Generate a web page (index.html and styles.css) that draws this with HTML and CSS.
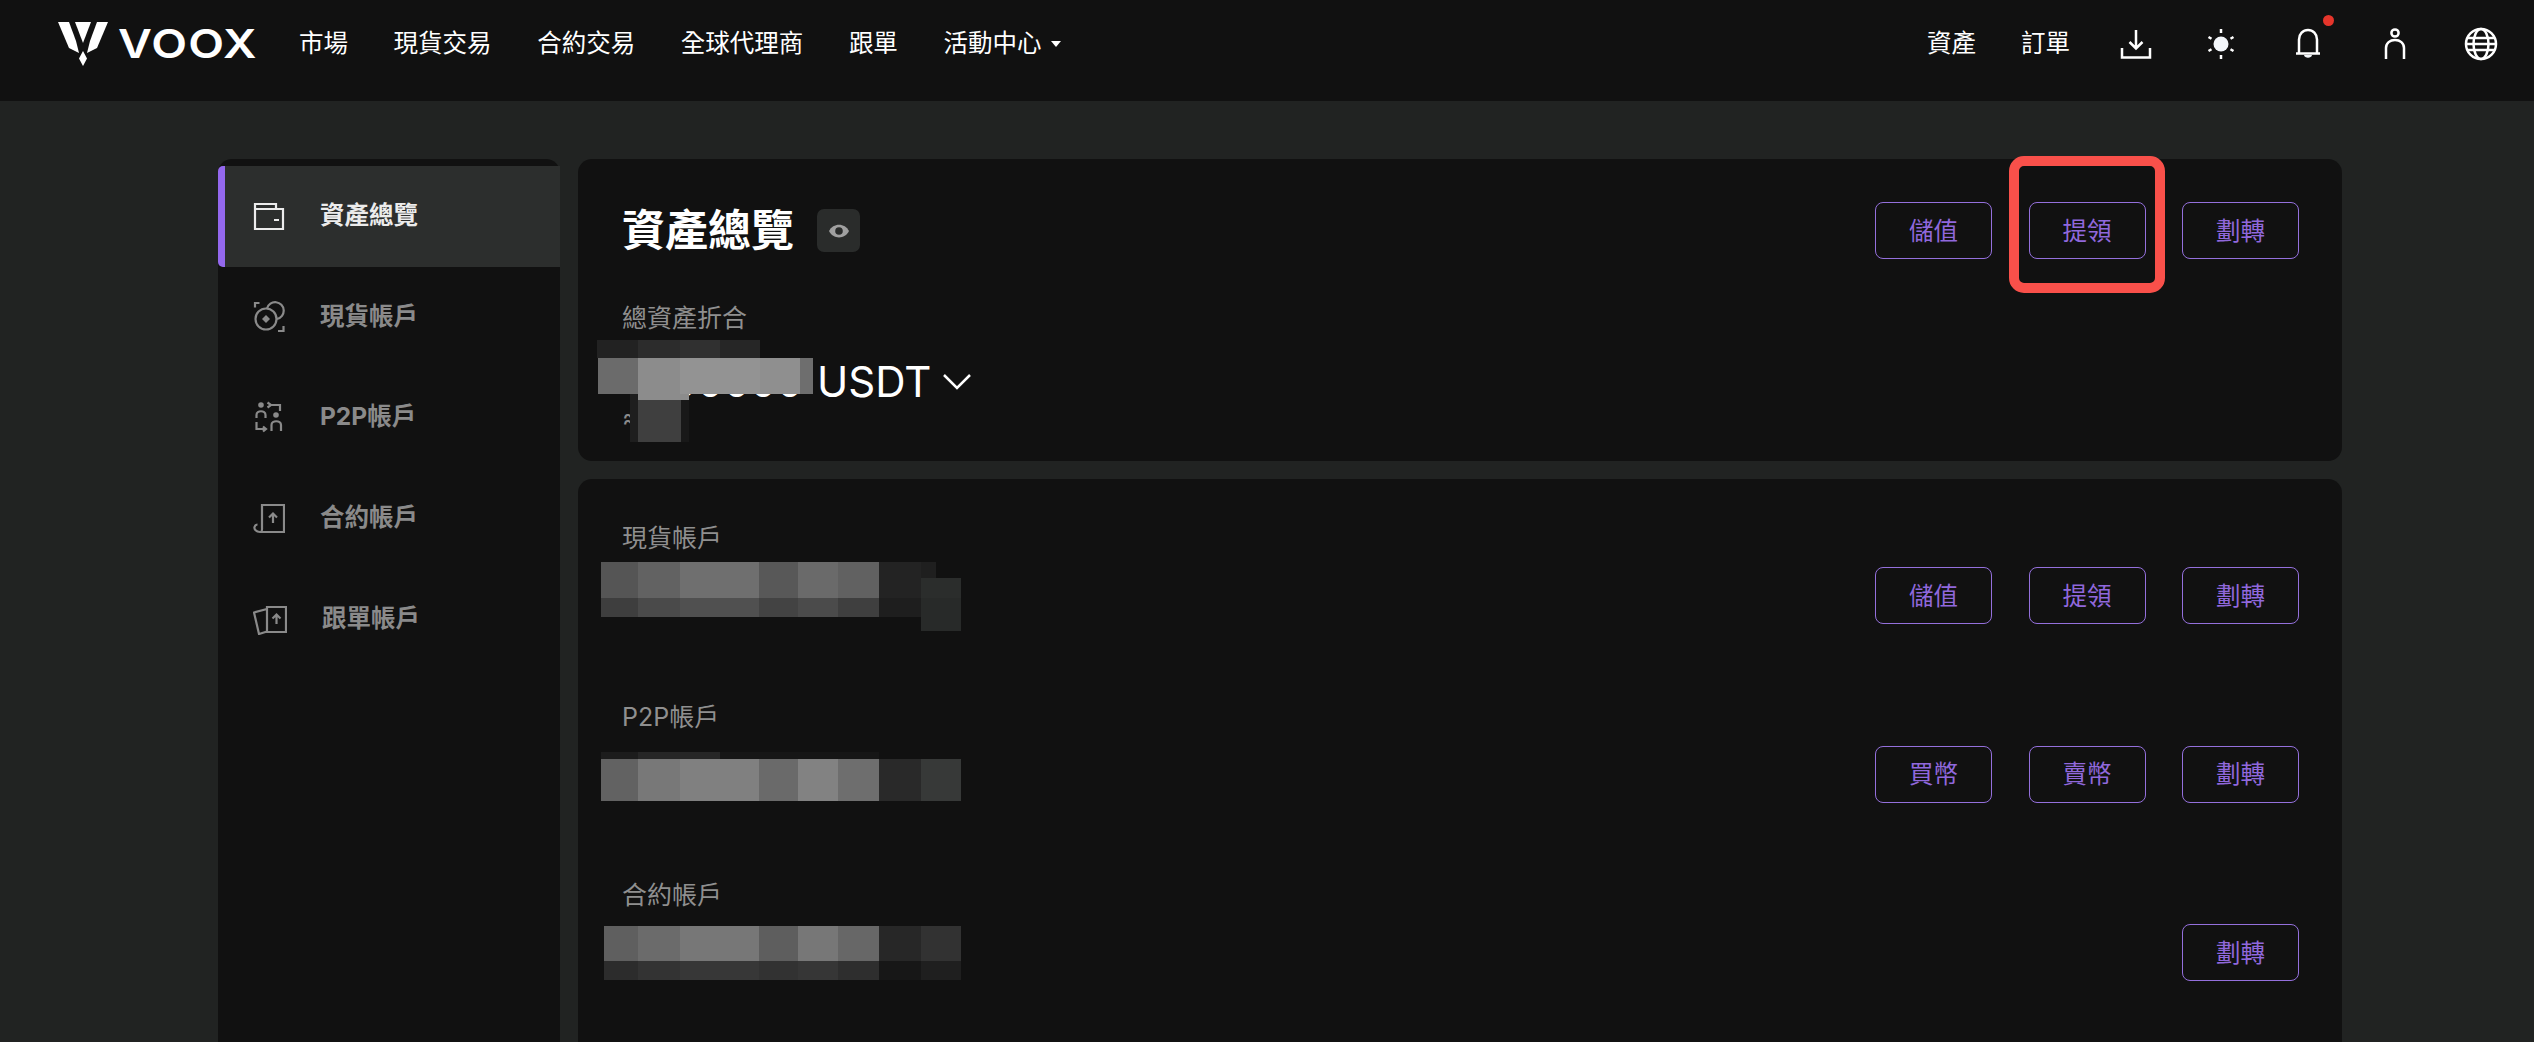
FILE: index.html
```html
<!DOCTYPE html>
<html lang="zh-Hant">
<head>
    <meta charset="UTF-8">
    <meta name="viewport" content="width=device-width, initial-scale=1.0">
    <title>VOOX 資產總覽</title>
    <link rel="stylesheet" href="styles.css">
</head>
<body>
    <header class="topbar">
        <a class="logo">
            <svg class="logo-mark" viewBox="0 0 50 44" width="50" height="44">
                <path fill="#fff" d="M0 0H11L18 19L21 31L11 26Z"/>
                <path fill="#fff" d="M50 0H39L32 19L29 31L39 26Z"/>
                <path fill="#fff" d="M17 0H33L25 21Z"/>
                <path fill="#fff" d="M25 29L29 36.500L25 44L21 36.500Z"/>
            </svg>
            <span class="logo-text">VOOX</span>
        </a>
        <nav class="nav">
            <a>市場</a>
            <a>現貨交易</a>
            <a>合約交易</a>
            <a>全球代理商</a>
            <a>跟單</a>
            <a class="nav-more">活動中心<i class="caret"></i></a>
        </nav>
        <div class="tools">
            <a>資產</a>
            <a>訂單</a>
            <svg class="tool-icon ic-down" viewBox="0 0 32 32" width="32" height="32">
                <path d="M16 2V20M9.500 14L16 20.500L22.500 14M2 20V29.500H30V20"/>
            </svg>
            <svg class="tool-icon ic-sun" viewBox="0 0 32 32" width="32" height="32">
                <circle class="solid" cx="16" cy="16" r="7.500"/>
                <path d="M16 1V5M16 27V31M3.500 9L6.500 10.800M25.500 21.200L28.500 23M3.500 23L6.500 21.200M25.500 10.800L28.500 9"/>
            </svg>
            <span class="bell">
                <svg class="tool-icon" viewBox="0 0 26 32" width="26" height="32">
                    <path d="M4 25V11.500C4 6 8 2 13 2S22 6 22 11.500V25M1 25.500H25"/>
                    <path class="solid" d="M9 27H17C16.500 30.500 9.500 30.500 9 27Z"/>
                </svg>
                <i class="bell-dot"></i>
            </span>
            <svg class="tool-icon ic-person" viewBox="0 0 22 32" width="22" height="32">
                <circle cx="11" cy="5" r="3.600"/>
                <path d="M2 31V20C2 15 6 12 11 12S20 15 20 20V31"/>
            </svg>
            <svg class="tool-icon ic-globe" viewBox="0 0 34 34" width="34" height="34">
                <circle cx="17" cy="17" r="15"/>
                <ellipse cx="17" cy="17" rx="7.500" ry="15"/>
                <path d="M3.500 11H30.500M2 17H32M3.500 23H30.500"/>
            </svg>
        </div>
    </header>

    <main class="page">
        <aside class="sidebar">
            <a class="side-item active">
                <svg class="side-icon" viewBox="0 0 32 32" width="32" height="32">
                    <path d="M2 29V4H23V9H30V29ZM2 9H23M21 20H26"/>
                </svg>
                <span>資產總覽</span>
            </a>
            <a class="side-item">
                <svg class="side-icon" viewBox="0 0 32 32" width="32" height="32">
                    <circle cx="13" cy="18" r="10.500"/>
                    <path d="M14 7.500A8.500 8.500 0 1 1 24 18"/>
                    <path class="fill" d="M13 14L17 18L13 22L9 18Z"/>
                    <path d="M6.500 2H2V6.500M25 30H30.500V25"/>
                </svg>
                <span>現貨帳戶</span>
            </a>
            <a class="side-item">
                <svg class="side-icon" viewBox="0 0 32 32" width="32" height="32">
                    <circle class="fill" cx="8" cy="4" r="2.800"/>
                    <circle class="fill" cx="23" cy="14" r="2.800"/>
                    <path d="M3.500 17V14C3.500 9 12.500 9 12.500 14V17M18.500 30V24C18.500 19 28 19 28 24V30"/>
                    <path d="M18 4H27V10M14.500 1.500L18 4L14.500 6.500M3.500 21V28H12M10 25.500L13 28L10 30.500"/>
                </svg>
                <span>P2P帳戶</span>
            </a>
            <a class="side-item">
                <svg class="side-icon" viewBox="0 0 32 32" width="32" height="32">
                    <path d="M9 25V3H31V30H7C3 30 1 27 1.500 25C2 23.500 3 22.500 4.500 22.500M8 30C9.500 29 9 27 9 25"/>
                    <path d="M20 21V12M16 15.500L20 11.500L24 15.500"/>
                </svg>
                <span>合約帳戶</span>
            </a>
            <a class="side-item">
                <svg class="side-icon" viewBox="0 0 34 32" width="34" height="32">
                    <path d="M14 4H33V29H14ZM14 6L1 9.500L6 31L14 28.500"/>
                    <path d="M23.500 21V12M19.500 15.500L23.500 11.500L27.500 15.500"/>
                </svg>
                <span>跟單帳戶</span>
            </a>
        </aside>

        <section class="content">
            <div class="card card-total">
                <div class="total-head">
                    <div class="title-wrap">
                        <h1>資產總覽</h1>
                        <span class="eye">
                            <svg viewBox="0 0 20 14" width="20" height="14">
                                <path class="eye-lid" d="M0 7C4 -1.500 16 -1.500 20 7C16 15.500 4 15.500 0 7Z"/>
                                <circle class="eye-hole" cx="10" cy="7" r="3.800"/>
                            </svg>
                        </span>
                    </div>
                    <div class="btns">
                        <button>儲值</button>
                        <button>提領</button>
                        <button>劃轉</button>
                    </div>
                </div>
                <p class="label total-label">總資產折合</p>
                <div class="amount">
                    <span class="digits">0.00000</span>
                    <span>USDT</span>
                    <svg class="chevron" viewBox="0 0 28 18" width="28" height="18">
                        <path d="M1 2L14 15L27 2"/>
                    </svg>
                </div>
                <p class="approx">≈</p>
                <div class="mosaic-total">
                    <div class="mt-a"></div>
                    <div class="mt-b"></div>
                    <div class="mt-c"></div>
                    <div class="mt-d"></div>
                </div>
                <div class="highlight"></div>
            </div>

            <div class="card card-accounts">
                <div class="acct">
                    <div>
                        <p class="label">現貨帳戶</p>
                        <div class="mosaic mosaic-spot">
                            <div class="spot-a"></div>
                            <div class="spot-b"></div>
                            <div class="spot-c"></div>
                        </div>
                    </div>
                    <div class="btns">
                        <button>儲值</button>
                        <button>提領</button>
                        <button>劃轉</button>
                    </div>
                </div>
                <div class="acct">
                    <div>
                        <p class="label">P2P帳戶</p>
                        <div class="mosaic mosaic-p2p">
                            <div class="p2p-a"></div>
                            <div class="p2p-b"></div>
                        </div>
                    </div>
                    <div class="btns">
                        <button>買幣</button>
                        <button>賣幣</button>
                        <button>劃轉</button>
                    </div>
                </div>
                <div class="acct">
                    <div>
                        <p class="label">合約帳戶</p>
                        <div class="mosaic mosaic-futures">
                            <div class="fut-a"></div>
                            <div class="fut-b"></div>
                        </div>
                    </div>
                    <div class="btns">
                        <button>劃轉</button>
                    </div>
                </div>
            </div>
        </section>
    </main>
</body>
</html>
```

FILE: styles.css
```css
* {
    box-sizing: border-box;
}
html, body {
    height: 100%;
}
body {
    margin: 0;
    overflow: hidden;
    background: #212322;
    color: #fff;
    font-family: Inter, "Noto Sans CJK TC", sans-serif;
}
p, h1 {
    margin: 0;
}
a {
    color: inherit;
    text-decoration: none;
}

/* top bar */
.topbar {
    display: flex;
    align-items: center;
    height: 101px;
    padding: 0 36px 13px 58px;
    background: #111;
    font-size: 24.500px;
}
.logo {
    display: flex;
    align-items: center;
    gap: 10px;
}
.logo-text {
    margin-right: 19px;
    font-size: 40px;
    font-weight: 600;
    letter-spacing: 1px;
    line-height: 1;
    transform: scaleX(1.165);
    transform-origin: left center;
}
.nav {
    display: flex;
    align-items: center;
    gap: 45.600px;
    margin-left: 42px;
}
.nav a, .tools a {
    margin-bottom: 5px;
}
.nav-more {
    display: flex;
    align-items: center;
}
.caret {
    width: 0;
    height: 0;
    margin: 4px 0 0 10px;
    border: 5px solid transparent;
    border-top: 6px solid #fff;
    border-bottom: 0;
}
.tools {
    display: flex;
    align-items: center;
    gap: 45px;
    margin-left: auto;
}
.tool-icon {
    display: block;
    fill: none;
    stroke: #fff;
    stroke-width: 2.500;
}
.tool-icon .solid {
    fill: #f3f6fa;
    stroke: none;
}
.ic-down {
    margin-left: 5px;
}
.ic-sun {
    margin-left: 8px;
}
.bell {
    position: relative;
    margin-left: 13px;
}
.bell-dot {
    position: absolute;
    top: -13px;
    right: -13px;
    width: 11px;
    height: 11px;
    border-radius: 50%;
    background: #e5352b;
}
.ic-person {
    margin-left: 18px;
}
.ic-globe {
    margin-left: 13px;
}

/* layout */
.page {
    display: grid;
    grid-template-columns: 342px 1fr;
    gap: 18px;
    height: calc(100% - 101px);
    padding: 58px 192px 0 218px;
}
.sidebar {
    padding-top: 7px;
    border-radius: 14px 14px 0 0;
    background: #111;
}
.side-item {
    display: flex;
    align-items: center;
    gap: 35px;
    height: 100.600px;
    padding-left: 35px;
    color: #8a8a8a;
    font-size: 24.500px;
    font-weight: 700;
}
.side-item span {
    margin-bottom: 5px;
}
.side-item.active {
    border-left: 7px solid #9468ee;
    border-radius: 5px 0 0 5px;
    padding-left: 28px;
    background: #2c2e2d;
    color: #ececec;
}
.side-icon {
    flex: none;
    fill: none;
    stroke: currentColor;
    stroke-width: 2.200;
}
.side-icon .fill {
    fill: currentColor;
    stroke: none;
}
.content {
    display: flex;
    flex-direction: column;
    gap: 18px;
    min-width: 0;
}
.card {
    position: relative;
    padding: 43px 43px 0 44px;
    border-radius: 14px;
    background: #111;
}
.card-total {
    height: 302px;
}
.card-accounts {
    flex: 1;
    padding-top: 42px;
    border-radius: 14px 14px 0 0;
}

/* total card */
.total-head {
    display: flex;
    align-items: center;
    justify-content: space-between;
}
.title-wrap {
    display: flex;
    align-items: center;
    gap: 23px;
}
h1 {
    font-size: 43px;
    font-weight: 700;
    line-height: 57px;
}
.eye {
    display: flex;
    align-items: center;
    justify-content: center;
    width: 43px;
    height: 43px;
    border-radius: 7px;
    background: #2a2c2b;
}
.eye-lid {
    fill: #a0a0a0;
}
.eye-hole {
    fill: #2a2c2b;
}
.label {
    color: #8f8f8f;
    font-size: 25px;
    line-height: 34px;
}
.total-label {
    margin-top: 42px;
}
.amount {
    display: flex;
    align-items: center;
    margin-top: 17px;
    font-size: 42px;
    line-height: 60px;
}
.digits {
    width: 195px;
    padding-right: 14px;
    text-align: right;
}
.chevron {
    margin-left: 12px;
    fill: none;
    stroke: #fff;
    stroke-width: 2.500;
}
.approx {
    margin-top: -9px;
    color: #8a8a8a;
    font-size: 26px;
    line-height: 30px;
}

/* pixelated amounts, they cover the numbers */
.mosaic-total {
    position: absolute;
    top: 181px;
    left: 19px;
}
.mt-a {
    width: 163px;
    height: 18px;
    background: linear-gradient(90deg, #222 0 41px, #2c2c2c 41px 83px, #303030 83px 123px, #262626 123px);
}
.mt-b {
    width: 215px;
    height: 36px;
    margin-left: 1px;
    background: linear-gradient(90deg, #6b6b6b 0 40px, #8c8c8c 40px 82px, #939393 82px 162px, #8f8f8f 162px 202px, #6e6e6e 202px);
}
.mt-c {
    width: 59px;
    height: 6px;
    margin-left: 33px;
    background: linear-gradient(90deg, #1e1e1e 0 8px, #8c8c8c 8px);
}
.mt-d {
    width: 59px;
    height: 42px;
    margin-left: 33px;
    background: linear-gradient(90deg, #1e1e1e 0 8px, #3f3f3f 8px 51px, #181818 51px);
}
.highlight {
    position: absolute;
    top: -3px;
    right: 177px;
    width: 156px;
    height: 137px;
    border: 10px solid #f9504a;
    border-radius: 15px;
}

/* buttons */
.btns {
    display: flex;
    gap: 36.500px;
}
.btns button {
    width: 117px;
    height: 57px;
    padding: 0 0 3px;
    border: 1.500px solid #9470dc;
    border-radius: 8px;
    background: none;
    color: #9068dc;
    font-family: inherit;
    font-size: 24.500px;
}

/* account rows */
.acct {
    display: flex;
    justify-content: space-between;
    height: 178.600px;
}
.acct .btns {
    margin-top: 46px;
}
.mosaic {
    margin-left: -21px;
    width: 360px;
}
.mosaic-spot {
    margin-top: 7px;
}
.spot-a {
    height: 36px;
    background:
        linear-gradient(#2b2d2c, #2b2d2c) 320px 16px / 40px 20px no-repeat,
        linear-gradient(90deg, #555 0 37px, #626262 37px 79px, #6f6f6f 79px 158px, #585858 158px 197px, #6a6a6a 197px 237px, #616161 237px 278px, #232323 278px 320px, #1f1f1f 320px 335px, #111 335px);
}
.spot-b {
    height: 19px;
    background: linear-gradient(90deg, #3e3e3e 0 37px, #4a4a4a 37px 79px, #505050 79px 158px, #434343 158px 197px, #4b4b4b 197px 237px, #3f3f3f 237px 278px, #1e1e1e 278px 320px, #282a29 320px);
}
.spot-c {
    width: 40px;
    height: 14px;
    margin-left: 320px;
    background: #282a29;
}
.mosaic-p2p {
    margin-top: 18px;
}
.p2p-a {
    height: 7px;
    background: linear-gradient(90deg, #1c1c1c 0 37px, #262626 37px 119px, #161616 119px 278px, #111 278px);
}
.p2p-b {
    height: 42px;
    background: linear-gradient(90deg, #626262 0 37px, #787878 37px 79px, #808080 79px 158px, #6a6a6a 158px 197px, #828282 197px 237px, #6e6e6e 237px 278px, #292929 278px 320px, #373938 320px);
}
.mosaic-futures {
    margin-top: 14px;
    margin-left: -18px;
    width: 357px;
}
.fut-a {
    height: 35px;
    background: linear-gradient(90deg, #5f5f5f 0 34px, #6b6b6b 34px 76px, #777 76px 155px, #5e5e5e 155px 194px, #777 194px 234px, #676767 234px 275px, #272727 275px 317px, #323232 317px);
}
.fut-b {
    height: 19px;
    background: linear-gradient(90deg, #2c2c2c 0 34px, #333 34px 76px, #373737 76px 155px, #323232 155px 194px, #363636 194px 234px, #2e2e2e 234px 275px, #171717 275px 317px, #1f1f1f 317px);
}
```
